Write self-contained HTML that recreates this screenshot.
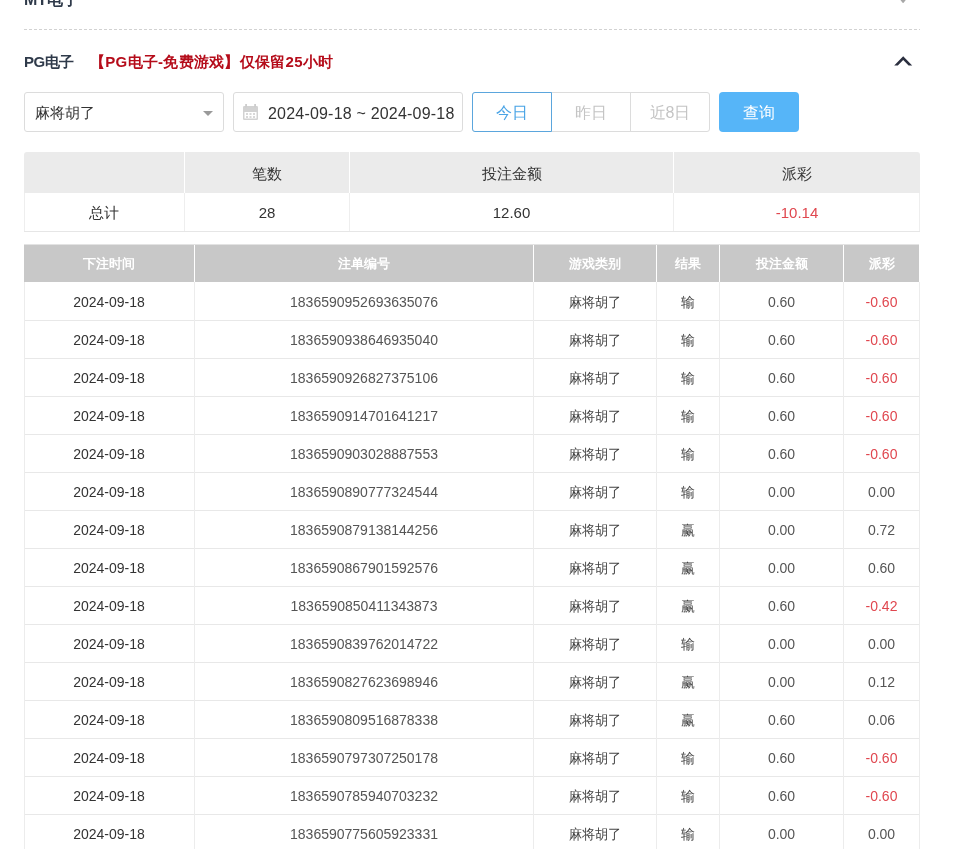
<!DOCTYPE html>
<html><head><meta charset="utf-8"><style>
html,body{-webkit-font-smoothing:antialiased;margin:0;padding:0;background:#fff;width:969px;height:849px;overflow:hidden;position:relative;font-family:"Liberation Sans",sans-serif;color:#333}
body>*{position:absolute}
body{will-change:transform}
.mt{left:24px;top:-10px;font-size:16px;font-weight:bold;color:#2f3a4a;line-height:20px;white-space:nowrap}
.mtchev{left:897px;top:0px}
.dash{left:24px;top:29px;width:896px;height:1px;background:repeating-linear-gradient(90deg,#d2d2d2 0,#d2d2d2 3px,transparent 3px,transparent 5px)}
.title{left:24px;top:52px;line-height:20px;font-size:15px;font-weight:bold;white-space:nowrap}
.pg{color:#2f3a4a;letter-spacing:-0.4px}
.red{color:#b50c1a;margin-left:16px;letter-spacing:0.27px}
.up{left:888px;top:48px}
.sel{left:24px;top:92px;width:198px;height:38px;border:1px solid #dcdcdc;border-radius:3px;font-size:15px;line-height:40px;text-indent:10px;color:#333}
.caret{left:203px;top:111px;width:0;height:0;border-left:5px solid transparent;border-right:5px solid transparent;border-top:5px solid #9a9a9a}
.date{left:233px;top:92px;width:228px;height:38px;border:1px solid #dcdcdc;border-radius:3px}
.cal{left:243px;top:104px}
.dtxt{left:268px;top:94px;line-height:40px;font-size:16px;color:#333;letter-spacing:0.2px;white-space:nowrap}
.grp{left:472px;top:92px;width:236px;height:38px;border:1px solid #dcdcdc;border-radius:3px}
.b{top:92px;height:40px;line-height:42px;text-align:center;font-size:16px}
.b1{left:472px;width:78px;height:38px;line-height:38px;border:1px solid #5ba6dd;color:#4aa4e6;border-radius:3px 0 0 3px;background:#fff;line-height:40px}
.div2{left:630px;top:92px;width:1px;height:40px;background:#dcdcdc}
.b2{left:552px;width:78px;color:#c4c4c4}
.b3{left:631px;width:78px;color:#c4c4c4}
.q{left:719px;top:92px;width:80px;height:40px;line-height:42px;font-weight:500;text-align:center;background:#56b5f8;color:#fff;font-size:16px;border-radius:4px}
.c{position:absolute;text-align:center;white-space:nowrap;font-size:14px;color:#333}
.sh{left:24px;top:152px;width:896px;height:41px;background:#ebebeb;border-radius:3px 3px 0 0}
.shv{top:152px;width:1px;height:41px;background:#fff}
.sv{top:193px;width:1px;height:38px;background:#eeeeee}
.sb{left:24px;top:231px;width:896px;height:1px;background:#e6e6e6}
.s{font-size:15px}
.neg{color:#e0474f !important}
.dh{left:24px;top:245px;width:895px;height:37px;background:#c8c8c8}
.dhtop{left:24px;top:244px;width:895px;height:1px;background:#e3e3e3}
.dhv{top:245px;width:1px;height:37px;background:#fff}
.hl{left:24px;width:896px;height:1px;background:#e8e8e8}
.vl{top:282px;width:1px;height:567px;background:#ececec}
.hd{color:#fff;font-weight:bold;font-size:13px}
.bd{}
.no{color:#555}
.num{color:#555}
.g{color:#444}
.mj{transform:scaleX(.94)}

</style></head><body>
<div class="mt">MT电子</div>
<svg class="mtchev" width="12" height="6" viewBox="0 0 12 6"><path d="M2.6 -1 L9.6 -1 L6.4 2.9 Q6.1 3.2 5.8 2.9 Z" fill="#a8a8a8"/></svg>
<div class="dash"></div>
<div class="title"><span class="pg">PG电子</span><span class="red">【PG电子-免费游戏】仅保留25小时</span></div>
<svg class="up" width="30" height="28" viewBox="0 0 30 28"><polygon points="6.2,17.5 15.2,8.3 24.2,17.5 20.6,17.5 15.2,11.9 9.8,17.5" fill="#2b2f3f"/></svg>
<div class="sel">麻将胡了</div><div class="caret"></div>
<div class="date"></div>
<svg class="cal" width="16" height="16" viewBox="0 0 16 16"><rect x="0" y="2" width="15" height="14" rx="1.2" fill="#d2d2d2"/><rect x="1.5" y="8" width="12" height="6.5" fill="#fff"/><g fill="#d8d8d8"><rect x="3" y="9" width="2" height="2"/><rect x="6.5" y="9" width="2" height="2"/><rect x="10" y="9" width="2" height="2"/><rect x="3" y="12" width="2" height="2"/><rect x="6.5" y="12" width="2" height="2"/><rect x="10" y="12" width="2" height="2"/></g><rect x="2.2" y="0" width="1.8" height="3.5" fill="#cdcdcd"/><rect x="11.2" y="0" width="1.8" height="3.5" fill="#cdcdcd"/></svg>
<div class="dtxt">2024-09-18 ~ 2024-09-18</div>
<div class="grp"></div>
<div class="b b1">今日</div><div class="div2"></div><div class="b b2">昨日</div><div class="b b3">近8日</div>
<div class="q">查询</div>
<div class="sh"></div><div class="shv" style="left:184px"></div><div class="sv" style="left:184px"></div><div class="shv" style="left:349px"></div><div class="sv" style="left:349px"></div><div class="shv" style="left:673px"></div><div class="sv" style="left:673px"></div><div class="sv" style="left:24px"></div><div class="sv" style="left:919px"></div><div class="sb"></div><div class="c s " style="left:24px;top:153px;width:160px;height:41px;line-height:41px"></div><div class="c s " style="left:185px;top:153px;width:164px;height:41px;line-height:41px">笔数</div><div class="c s " style="left:350px;top:153px;width:323px;height:41px;line-height:41px">投注金额</div><div class="c s " style="left:674px;top:153px;width:246px;height:41px;line-height:41px">派彩</div><div class="c s " style="left:24px;top:194px;width:160px;height:38px;line-height:38px">总计</div><div class="c s " style="left:185px;top:194px;width:164px;height:38px;line-height:38px">28</div><div class="c s " style="left:350px;top:194px;width:323px;height:38px;line-height:38px">12.60</div><div class="c s neg" style="left:674px;top:194px;width:246px;height:38px;line-height:38px">-10.14</div>
<div class="dh"></div><div class="dhtop"></div><div class="dhv" style="left:194px"></div><div class="dhv" style="left:533px"></div><div class="dhv" style="left:656px"></div><div class="dhv" style="left:719px"></div><div class="dhv" style="left:843px"></div><div class="c hd" style="left:24px;top:245px;width:170px;height:37px;line-height:37px">下注时间</div><div class="c hd" style="left:195px;top:245px;width:338px;height:37px;line-height:37px">注单编号</div><div class="c hd" style="left:534px;top:245px;width:122px;height:37px;line-height:37px">游戏类别</div><div class="c hd" style="left:657px;top:245px;width:62px;height:37px;line-height:37px">结果</div><div class="c hd" style="left:720px;top:245px;width:123px;height:37px;line-height:37px">投注金额</div><div class="c hd" style="left:844px;top:245px;width:75px;height:37px;line-height:37px">派彩</div><div class="hl" style="top:320px"></div><div class="hl" style="top:358px"></div><div class="hl" style="top:396px"></div><div class="hl" style="top:434px"></div><div class="hl" style="top:472px"></div><div class="hl" style="top:510px"></div><div class="hl" style="top:548px"></div><div class="hl" style="top:586px"></div><div class="hl" style="top:624px"></div><div class="hl" style="top:662px"></div><div class="hl" style="top:700px"></div><div class="hl" style="top:738px"></div><div class="hl" style="top:776px"></div><div class="hl" style="top:814px"></div><div class="hl" style="top:852px"></div><div class="vl" style="left:24px"></div><div class="vl" style="left:194px"></div><div class="vl" style="left:533px"></div><div class="vl" style="left:656px"></div><div class="vl" style="left:719px"></div><div class="vl" style="left:843px"></div><div class="vl" style="left:919px"></div><div class="c bd" style="left:24px;top:283px;width:170px;height:38px;line-height:38px">2024-09-18</div><div class="c bd no" style="left:195px;top:283px;width:338px;height:38px;line-height:38px">1836590952693635076</div><div class="c bd g mj" style="left:534px;top:283px;width:122px;height:38px;line-height:38px">麻将胡了</div><div class="c bd g" style="left:657px;top:283px;width:62px;height:38px;line-height:38px">输</div><div class="c bd num" style="left:720px;top:283px;width:123px;height:38px;line-height:38px">0.60</div><div class="c bd neg" style="left:844px;top:283px;width:75px;height:38px;line-height:38px">-0.60</div><div class="c bd" style="left:24px;top:321px;width:170px;height:38px;line-height:38px">2024-09-18</div><div class="c bd no" style="left:195px;top:321px;width:338px;height:38px;line-height:38px">1836590938646935040</div><div class="c bd g mj" style="left:534px;top:321px;width:122px;height:38px;line-height:38px">麻将胡了</div><div class="c bd g" style="left:657px;top:321px;width:62px;height:38px;line-height:38px">输</div><div class="c bd num" style="left:720px;top:321px;width:123px;height:38px;line-height:38px">0.60</div><div class="c bd neg" style="left:844px;top:321px;width:75px;height:38px;line-height:38px">-0.60</div><div class="c bd" style="left:24px;top:359px;width:170px;height:38px;line-height:38px">2024-09-18</div><div class="c bd no" style="left:195px;top:359px;width:338px;height:38px;line-height:38px">1836590926827375106</div><div class="c bd g mj" style="left:534px;top:359px;width:122px;height:38px;line-height:38px">麻将胡了</div><div class="c bd g" style="left:657px;top:359px;width:62px;height:38px;line-height:38px">输</div><div class="c bd num" style="left:720px;top:359px;width:123px;height:38px;line-height:38px">0.60</div><div class="c bd neg" style="left:844px;top:359px;width:75px;height:38px;line-height:38px">-0.60</div><div class="c bd" style="left:24px;top:397px;width:170px;height:38px;line-height:38px">2024-09-18</div><div class="c bd no" style="left:195px;top:397px;width:338px;height:38px;line-height:38px">1836590914701641217</div><div class="c bd g mj" style="left:534px;top:397px;width:122px;height:38px;line-height:38px">麻将胡了</div><div class="c bd g" style="left:657px;top:397px;width:62px;height:38px;line-height:38px">输</div><div class="c bd num" style="left:720px;top:397px;width:123px;height:38px;line-height:38px">0.60</div><div class="c bd neg" style="left:844px;top:397px;width:75px;height:38px;line-height:38px">-0.60</div><div class="c bd" style="left:24px;top:435px;width:170px;height:38px;line-height:38px">2024-09-18</div><div class="c bd no" style="left:195px;top:435px;width:338px;height:38px;line-height:38px">1836590903028887553</div><div class="c bd g mj" style="left:534px;top:435px;width:122px;height:38px;line-height:38px">麻将胡了</div><div class="c bd g" style="left:657px;top:435px;width:62px;height:38px;line-height:38px">输</div><div class="c bd num" style="left:720px;top:435px;width:123px;height:38px;line-height:38px">0.60</div><div class="c bd neg" style="left:844px;top:435px;width:75px;height:38px;line-height:38px">-0.60</div><div class="c bd" style="left:24px;top:473px;width:170px;height:38px;line-height:38px">2024-09-18</div><div class="c bd no" style="left:195px;top:473px;width:338px;height:38px;line-height:38px">1836590890777324544</div><div class="c bd g mj" style="left:534px;top:473px;width:122px;height:38px;line-height:38px">麻将胡了</div><div class="c bd g" style="left:657px;top:473px;width:62px;height:38px;line-height:38px">输</div><div class="c bd num" style="left:720px;top:473px;width:123px;height:38px;line-height:38px">0.00</div><div class="c bd num" style="left:844px;top:473px;width:75px;height:38px;line-height:38px">0.00</div><div class="c bd" style="left:24px;top:511px;width:170px;height:38px;line-height:38px">2024-09-18</div><div class="c bd no" style="left:195px;top:511px;width:338px;height:38px;line-height:38px">1836590879138144256</div><div class="c bd g mj" style="left:534px;top:511px;width:122px;height:38px;line-height:38px">麻将胡了</div><div class="c bd g" style="left:657px;top:511px;width:62px;height:38px;line-height:38px">赢</div><div class="c bd num" style="left:720px;top:511px;width:123px;height:38px;line-height:38px">0.00</div><div class="c bd num" style="left:844px;top:511px;width:75px;height:38px;line-height:38px">0.72</div><div class="c bd" style="left:24px;top:549px;width:170px;height:38px;line-height:38px">2024-09-18</div><div class="c bd no" style="left:195px;top:549px;width:338px;height:38px;line-height:38px">1836590867901592576</div><div class="c bd g mj" style="left:534px;top:549px;width:122px;height:38px;line-height:38px">麻将胡了</div><div class="c bd g" style="left:657px;top:549px;width:62px;height:38px;line-height:38px">赢</div><div class="c bd num" style="left:720px;top:549px;width:123px;height:38px;line-height:38px">0.00</div><div class="c bd num" style="left:844px;top:549px;width:75px;height:38px;line-height:38px">0.60</div><div class="c bd" style="left:24px;top:587px;width:170px;height:38px;line-height:38px">2024-09-18</div><div class="c bd no" style="left:195px;top:587px;width:338px;height:38px;line-height:38px">1836590850411343873</div><div class="c bd g mj" style="left:534px;top:587px;width:122px;height:38px;line-height:38px">麻将胡了</div><div class="c bd g" style="left:657px;top:587px;width:62px;height:38px;line-height:38px">赢</div><div class="c bd num" style="left:720px;top:587px;width:123px;height:38px;line-height:38px">0.60</div><div class="c bd neg" style="left:844px;top:587px;width:75px;height:38px;line-height:38px">-0.42</div><div class="c bd" style="left:24px;top:625px;width:170px;height:38px;line-height:38px">2024-09-18</div><div class="c bd no" style="left:195px;top:625px;width:338px;height:38px;line-height:38px">1836590839762014722</div><div class="c bd g mj" style="left:534px;top:625px;width:122px;height:38px;line-height:38px">麻将胡了</div><div class="c bd g" style="left:657px;top:625px;width:62px;height:38px;line-height:38px">输</div><div class="c bd num" style="left:720px;top:625px;width:123px;height:38px;line-height:38px">0.00</div><div class="c bd num" style="left:844px;top:625px;width:75px;height:38px;line-height:38px">0.00</div><div class="c bd" style="left:24px;top:663px;width:170px;height:38px;line-height:38px">2024-09-18</div><div class="c bd no" style="left:195px;top:663px;width:338px;height:38px;line-height:38px">1836590827623698946</div><div class="c bd g mj" style="left:534px;top:663px;width:122px;height:38px;line-height:38px">麻将胡了</div><div class="c bd g" style="left:657px;top:663px;width:62px;height:38px;line-height:38px">赢</div><div class="c bd num" style="left:720px;top:663px;width:123px;height:38px;line-height:38px">0.00</div><div class="c bd num" style="left:844px;top:663px;width:75px;height:38px;line-height:38px">0.12</div><div class="c bd" style="left:24px;top:701px;width:170px;height:38px;line-height:38px">2024-09-18</div><div class="c bd no" style="left:195px;top:701px;width:338px;height:38px;line-height:38px">1836590809516878338</div><div class="c bd g mj" style="left:534px;top:701px;width:122px;height:38px;line-height:38px">麻将胡了</div><div class="c bd g" style="left:657px;top:701px;width:62px;height:38px;line-height:38px">赢</div><div class="c bd num" style="left:720px;top:701px;width:123px;height:38px;line-height:38px">0.60</div><div class="c bd num" style="left:844px;top:701px;width:75px;height:38px;line-height:38px">0.06</div><div class="c bd" style="left:24px;top:739px;width:170px;height:38px;line-height:38px">2024-09-18</div><div class="c bd no" style="left:195px;top:739px;width:338px;height:38px;line-height:38px">1836590797307250178</div><div class="c bd g mj" style="left:534px;top:739px;width:122px;height:38px;line-height:38px">麻将胡了</div><div class="c bd g" style="left:657px;top:739px;width:62px;height:38px;line-height:38px">输</div><div class="c bd num" style="left:720px;top:739px;width:123px;height:38px;line-height:38px">0.60</div><div class="c bd neg" style="left:844px;top:739px;width:75px;height:38px;line-height:38px">-0.60</div><div class="c bd" style="left:24px;top:777px;width:170px;height:38px;line-height:38px">2024-09-18</div><div class="c bd no" style="left:195px;top:777px;width:338px;height:38px;line-height:38px">1836590785940703232</div><div class="c bd g mj" style="left:534px;top:777px;width:122px;height:38px;line-height:38px">麻将胡了</div><div class="c bd g" style="left:657px;top:777px;width:62px;height:38px;line-height:38px">输</div><div class="c bd num" style="left:720px;top:777px;width:123px;height:38px;line-height:38px">0.60</div><div class="c bd neg" style="left:844px;top:777px;width:75px;height:38px;line-height:38px">-0.60</div><div class="c bd" style="left:24px;top:815px;width:170px;height:38px;line-height:38px">2024-09-18</div><div class="c bd no" style="left:195px;top:815px;width:338px;height:38px;line-height:38px">1836590775605923331</div><div class="c bd g mj" style="left:534px;top:815px;width:122px;height:38px;line-height:38px">麻将胡了</div><div class="c bd g" style="left:657px;top:815px;width:62px;height:38px;line-height:38px">输</div><div class="c bd num" style="left:720px;top:815px;width:123px;height:38px;line-height:38px">0.00</div><div class="c bd num" style="left:844px;top:815px;width:75px;height:38px;line-height:38px">0.00</div>
</body></html>
